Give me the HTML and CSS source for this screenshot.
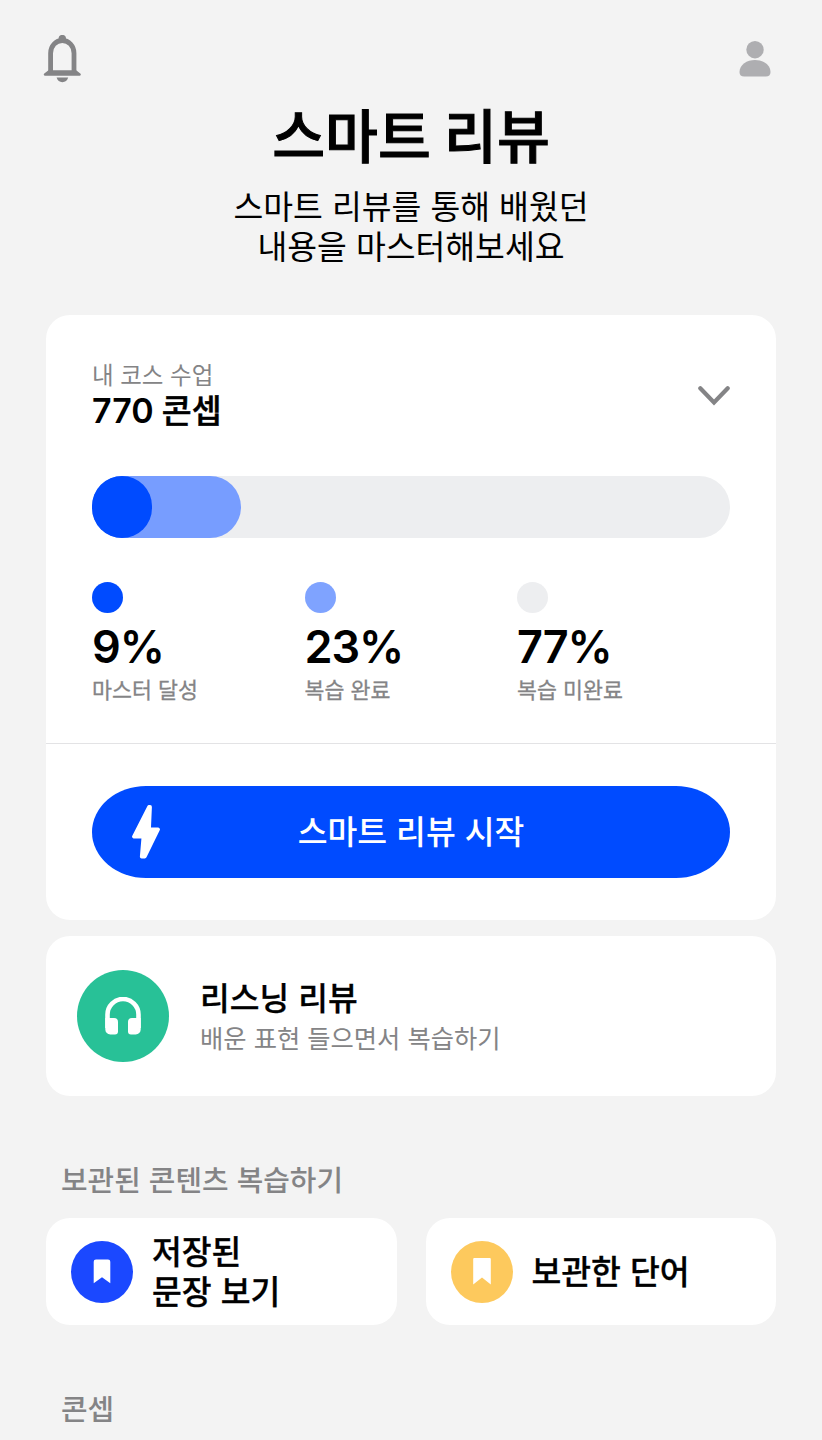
FILE: index.html
```html
<!DOCTYPE html>
<html lang="ko">
<head>
<meta charset="utf-8">
<title>스마트 리뷰</title>
<link rel="stylesheet" href="styles.css">
</head>
<body>
<header class="topbar">
  <svg class="bell" width="38" height="48" viewBox="0 0 38 48" aria-label="알림">
    <path d="M7.600 38V18.200a11.700 12.700 0 0 1 23.400 0V38" fill="none" stroke="#848486" stroke-width="4.800"/>
    <path d="M15.600 7V3.600a3.700 3.700 0 0 1 7.400 0V7z" fill="#848486"/>
    <path d="M5.500 35.200h27.600l4.200 3.300a1.200 1.200 0 0 1-.7 2.200H2a1.200 1.200 0 0 1-.7-2.200z" fill="#848486"/>
    <path d="M13.600 42.500h11.600c-.8 2.800-3 4.700-5.800 4.700s-5-1.900-5.800-4.700z" fill="#848486"/>
  </svg>
  <svg class="profile" width="32" height="36" viewBox="0 0 32 36" aria-label="프로필">
    <circle cx="16" cy="8.700" r="8.700" fill="#aeaeb1"/>
    <path d="M.5 31C.5 23.500 8 18.900 16 18.900S31.500 23.500 31.500 31c0 3.200-1.700 4.600-4.600 4.600H5.100C2.200 35.600.5 34.200.5 31z" fill="#aeaeb1"/>
  </svg>
</header>
<main class="page">
  <section class="intro">
    <h1 class="title">스마트 리뷰</h1>
    <p class="subtitle">스마트 리뷰를 통해 배웠던<br>내용을 마스터해보세요</p>
  </section>

  <section class="card course">
    <div class="course-body">
      <div class="course-head">
        <div>
          <div class="course-label">내 코스 수업</div>
          <div class="course-count"><span class="num">770</span> 콘셉</div>
        </div>
        <svg class="chevron" width="32" height="20" viewBox="0 0 32 20">
          <path d="M2.300 2.300 16 16.500 29.700 2.300" fill="none" stroke="#848486" stroke-width="4.200" stroke-linecap="round"/>
        </svg>
      </div>
      <div class="progress">
        <div class="progress-reviewed"><div class="progress-mastered"></div></div>
      </div>
      <div class="stats">
        <div class="stat"><i class="dot dot-mastered"></i><div class="stat-value">9%</div><div class="stat-label">마스터 달성</div></div>
        <div class="stat"><i class="dot dot-reviewed"></i><div class="stat-value">23%</div><div class="stat-label">복습 완료</div></div>
        <div class="stat"><i class="dot dot-left"></i><div class="stat-value">77%</div><div class="stat-label">복습 미완료</div></div>
      </div>
    </div>
    <div class="course-action">
      <button class="start">
        <svg class="bolt" width="28" height="54" viewBox="0 0 28 54">
          <path d="M17 2 2 31.500h9.500L9.800 51.500h3L26 24.500h-9L18 2z" fill="#fff" stroke="#fff" stroke-width="3.800" stroke-linejoin="round"/>
        </svg>
        <span>스마트 리뷰 시작</span>
      </button>
    </div>
  </section>

  <section class="card listening">
    <span class="listening-icon">
      <svg width="36" height="38" viewBox="0 0 36 38">
        <path d="M2.500 31V17.500a15.500 15.500 0 0 1 31 0V31" fill="none" stroke="#fff" stroke-width="4.600"/>
        <path d="M.3 21H9a4 4 0 0 1 4 4v9.500a3 3 0 0 1-3 3H5.300a5 5 0 0 1-5-5zM35.700 21H27a4 4 0 0 0-4 4v9.500a3 3 0 0 0 3 3h4.700a5 5 0 0 0 5-5z" fill="#fff"/>
      </svg>
    </span>
    <div class="listening-text">
      <div class="listening-title">리스닝 리뷰</div>
      <div class="listening-sub">배운 표현 들으면서 복습하기</div>
    </div>
  </section>

  <h2 class="section-title">보관된 콘텐츠 복습하기</h2>
  <section class="saved">
    <div class="card saved-card">
      <span class="saved-icon blue">
        <svg width="18" height="25" viewBox="0 0 18 25"><path d="M3 .5h12a2.300 2.300 0 0 1 2.300 2.300V24.300L9 18.300.7 24.300V2.800A2.300 2.300 0 0 1 3 .5z" fill="#fff"/></svg>
      </span>
      <span class="saved-text">저장된<br>문장 보기</span>
    </div>
    <div class="card saved-card">
      <span class="saved-icon yellow">
        <svg width="18" height="27" viewBox="0 0 18 27"><path d="M1.200 0h15.600a1 1 0 0 1 1 1v25.500L9 19.500.2 26.500V1a1 1 0 0 1 1-1z" fill="#fff"/></svg>
      </span>
      <span class="saved-text">보관한 단어</span>
    </div>
  </section>
  <h2 class="section-title concept">콘셉</h2>
</main>
</body>
</html>
```

FILE: styles.css
```css
* { box-sizing: border-box; margin: 0; padding: 0; }
body {
  width: 822px;
  height: 1440px;
  overflow: hidden;
  background: #f3f3f3;
  color: #000;
  font-family: "Noto Sans CJK KR", sans-serif;
}
svg { display: block; flex: none; }

.topbar {
  display: flex;
  justify-content: space-between;
  height: 98px;
  padding: 35px 51px 0 43px;
}
.profile { margin-top: 6px; }

.page { padding: 0 46px; }
.intro { height: 217px; text-align: center; }
.title { font-size: 57.500px; line-height: 70px; font-weight: 500; word-spacing: -3px; -webkit-text-stroke: 1px #000; }
.subtitle { margin-top: 17px; font-size: 32.400px; line-height: 40px; }

.card { background: #fff; border-radius: 24px; }
.course { height: 605px; }
.course-body { height: 429px; padding: 43px 46px 0; border-bottom: 1px solid #e3e3e5; }
.course-head { display: flex; justify-content: space-between; height: 118px; }
.course-label { font-size: 23.500px; line-height: 32px; color: #848486; }
.course-count { margin-top: -1px; font-size: 32.500px; line-height: 40px; font-weight: 500; word-spacing: -1px; -webkit-text-stroke: .5px #000; }
.num { font-family: Inter, sans-serif; font-size: 34px; font-weight: 600; -webkit-text-stroke: 0; }
.chevron { margin-top: 28px; }

.progress { height: 62px; border-radius: 31px; background: #edeef0; }
.progress-reviewed { width: 149px; height: 62px; border-radius: 31px; background: #779dff; }
.progress-mastered { width: 60px; height: 62px; border-radius: 31px; background: #004bff; }

.stats { display: grid; grid-template-columns: repeat(3, 212.500px); margin-top: 43.500px; }
.dot { display: block; width: 31px; height: 31px; border-radius: 50%; }
.dot-mastered { background: #004bff; }
.dot-reviewed { background: #7fa3ff; }
.dot-left { background: #edeef0; }
.stat-value { margin-top: 8px; font: 600 45px/52px Inter, sans-serif; letter-spacing: -1.100px; }
.stat-label { font-size: 21.700px; line-height: 32px; color: #848486; -webkit-text-stroke: .3px #848486; }

.course-action { padding: 42px 46px 0; }
.start {
  display: grid;
  grid-template-columns: 106px 1fr 106px;
  align-items: center;
  width: 638px;
  height: 92px;
  border: 0;
  border-radius: 54px / 46px;
  background: #004bff;
  color: #fff;
  font: 500 32.400px/40px "Noto Sans CJK KR", sans-serif;
}
.start span { padding-bottom: 4px; }
.bolt { margin-left: 40px; }

.listening { display: flex; align-items: center; gap: 31px; height: 160px; margin-top: 16px; padding: 0 31px; }
.listening-icon { display: grid; place-items: center; width: 92px; height: 92px; border-radius: 50%; background: #28c197; }
.listening-text { padding-bottom: 2px; }
.listening-title { font-size: 32.300px; line-height: 40px; font-weight: 500; -webkit-text-stroke: .3px #000; }
.listening-sub { margin-top: 3px; font-size: 25.300px; line-height: 36px; color: #848486; }

.section-title { margin: 62px 0 0 15px; font-size: 28.900px; line-height: 40px; font-weight: 500; color: #848486; }
.saved { display: grid; grid-template-columns: 1fr 1fr; gap: 29px; margin-top: 20px; }
.saved-card { display: flex; align-items: center; gap: 19px; height: 107px; padding-left: 25px; }
.saved-icon { display: grid; place-items: center; width: 62px; height: 62px; border-radius: 50%; }
.blue { background: #1b48ff; }
.yellow { background: #fdc95d; }
.saved-text { padding-bottom: 3px; font-size: 32.400px; line-height: 40px; font-weight: 500; -webkit-text-stroke: .3px #000; }
```
